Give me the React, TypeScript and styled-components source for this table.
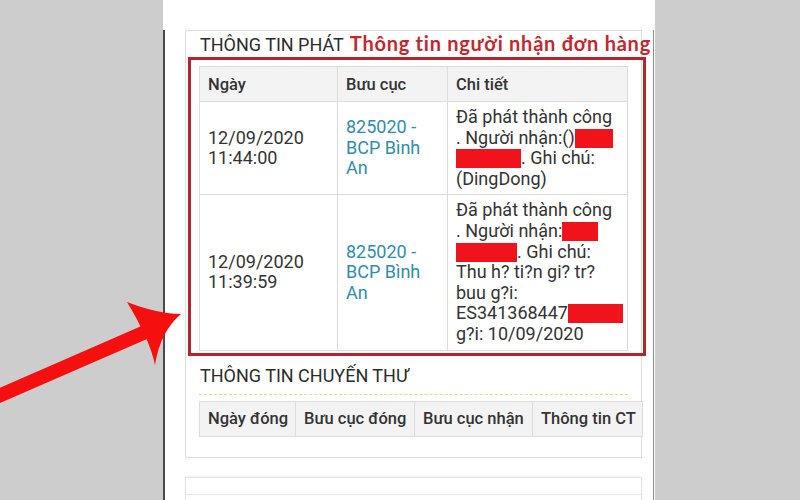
import React from "react";
import styled, { createGlobalStyle } from "styled-components";

const GlobalStyle = createGlobalStyle`
  html, body { margin: 0; padding: 0; }
  body { background: #cdcdcd; font-family: Roboto, "Noto Sans", Arial, sans-serif; }
  * { box-sizing: border-box; }
`;

const Page = styled.div`
  position: relative;
  width: 800px;
  height: 500px;
  overflow: hidden;
  background: #cdcdcd;
`;

const Column = styled.div`
  margin-left: 163px;
  width: 492px;
  height: 500px;
  background: #ffffff;
  padding-top: 30px;
`;

const Frame = styled.div`
  width: 491px;
  height: 470px;
  border-left: 2px solid #4a4a4a;
  border-right: 1px solid #8a8a8a;
  padding-left: 20px;
`;

const Panel = styled.div`
  position: relative;
  width: 457px;
  border: 1px solid #dedede;
  padding: 0 14px 20px 13px;
`;

const TitleRow = styled.div`
  display: flex;
  align-items: baseline;
  gap: 6px;
  height: 35px;
  white-space: nowrap;
`;

const Title = styled.div<{ $dashed?: boolean }>`
  font-size: 18px;
  line-height: 24px;
  color: #2b2b2b;
  padding-left: 1px;
  text-transform: uppercase;
  ${(p) =>
    p.$dashed &&
    `
    margin-top: 13px;
    padding-bottom: 6px;
    border-bottom: 1.5px dashed #dcdc9a;
    width: 429px;
  `}
`;

const Annotation = styled.div`
  font-family: Lato, "Open Sans", sans-serif;
  font-weight: 700;
  font-size: 20px;
  letter-spacing: 0.75px;
  line-height: 24px;
  color: #c4262e;
`;

const Table = styled.table<{ $width: number; $top?: number }>`
  width: ${(p) => p.$width}px;
  margin-top: ${(p) => p.$top ?? 0}px;
  border-collapse: collapse;
  table-layout: fixed;
  font-size: 18px;
  color: #333333;
  border: 1px solid #dcdcdc;
`;

const Th = styled.th<{ $w: number }>`
  width: ${(p) => p.$w}px;
  height: 35px;
  background: #f3f3f3;
  border: 1px solid #dcdcdc;
  padding: 0 8px;
  text-align: left;
  font-size: 16.5px;
  font-weight: 500;
  color: #333;
  white-space: nowrap;
`;

const Td = styled.td<{ $top?: boolean }>`
  border: 1px solid #dcd8e8;
  padding: 5px 8px;
  line-height: 20.6px;
  white-space: nowrap;
  vertical-align: ${(p) => (p.$top ? "top" : "middle")};
`;

const Office = styled.span`
  color: #2f8dab;
`;

const Redact = styled.span<{ $w: number }>`
  display: inline-block;
  width: ${(p) => p.$w}px;
  height: 19px;
  background: #f0131c;
  vertical-align: -4px;
`;

const RedFrame = styled.div`
  position: absolute;
  left: 2px;
  top: 26px;
  width: 458px;
  height: 299px;
  border: 3px solid #b4252f;
  pointer-events: none;
`;

const NextPanel = styled.div`
  margin-top: 19px;
  width: 457px;
  height: 40px;
  border: 1px solid #e4e4e4;
  box-shadow: 0 -1px 2px rgba(0, 0, 0, 0.06);
`;

const NextBar = styled.div`
  height: 17px;
  border-bottom: 1px solid #e6e6e6;
`;

const ArrowSvg = styled.svg`
  position: absolute;
  left: 0;
  top: 0;
  pointer-events: none;
`;

const rows = [
  {
    date: ["12/09/2020", "11:44:00"],
    detail: (
      <>
        Đã phát thành công
        <br />. Người nhận:()
        <Redact $w={38} />
        <br />
        <Redact $w={65} />. Ghi chú:
        <br />
        (DingDong)
      </>
    ),
  },
  {
    date: ["12/09/2020", "11:39:59"],
    detail: (
      <>
        Đã phát thành công
        <br />. Người nhận:
        <Redact $w={36} />
        <br />
        <Redact $w={61} />. Ghi chú:
        <br />
        Thu h? ti?n gi? tr?
        <br />
        buu g?i:
        <br />
        ES341368447
        <Redact $w={55} />
        <br />
        g?i: 10/09/2020
      </>
    ),
  },
];

export default function App() {
  return (
    <Page>
      <GlobalStyle />
      <Column>
        <Frame>
          <Panel>
            <TitleRow>
              <Title>Thông tin phát</Title>
              <Annotation>Thông tin người nhận đơn hàng</Annotation>
            </TitleRow>
            <Table $width={428}>
              <thead>
                <tr>
                  <Th $w={138}>Ngày</Th>
                  <Th $w={110}>Bưu cục</Th>
                  <Th $w={180}>Chi tiết</Th>
                </tr>
              </thead>
              <tbody>
                {rows.map((r, i) => (
                  <tr key={i}>
                    <Td>
                      {r.date[0]}
                      <br />
                      {r.date[1]}
                    </Td>
                    <Td>
                      <Office>
                        825020 -<br />
                        BCP Bình
                        <br />
                        An
                      </Office>
                    </Td>
                    <Td $top>{r.detail}</Td>
                  </tr>
                ))}
              </tbody>
            </Table>
            <Title $dashed>Thông tin chuyến thư</Title>
            <Table $width={443} $top={6}>
              <thead>
                <tr>
                  <Th $w={96}>Ngày đóng</Th>
                  <Th $w={119}>Bưu cục đóng</Th>
                  <Th $w={118}>Bưu cục nhận</Th>
                  <Th $w={110}>Thông tin CT</Th>
                </tr>
              </thead>
            </Table>
            <RedFrame />
          </Panel>
          <NextPanel>
            <NextBar />
          </NextPanel>
        </Frame>
      </Column>
      <ArrowSvg width="800" height="500" viewBox="0 0 800 500">
        <line x1="-4" y1="397" x2="150" y2="330" stroke="#f50f0f" strokeWidth="14" />
        <path
          d="M127 302 Q158 314 181 314 Q160 332 155 365 Q150 340 127 302 Z"
          fill="#f50f0f"
        />
      </ArrowSvg>
    </Page>
  );
}
